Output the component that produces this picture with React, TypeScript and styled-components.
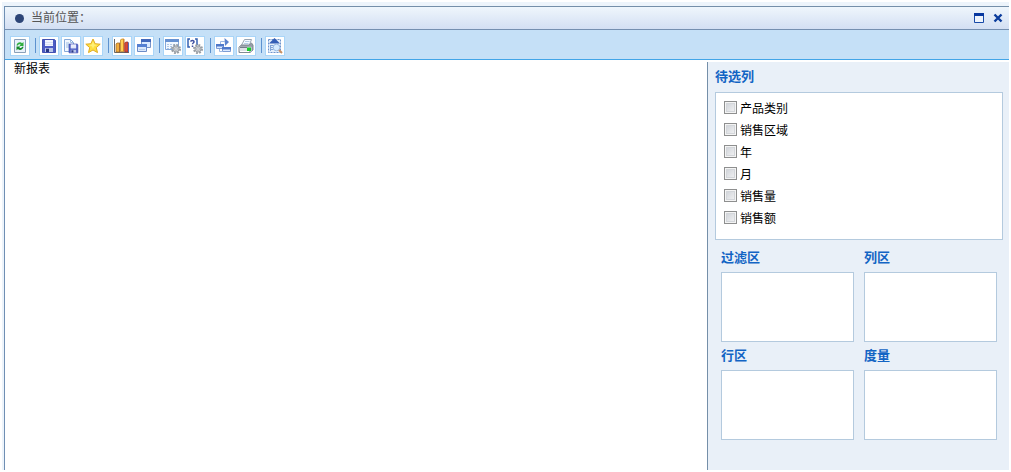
import React from "react";
import styled, { createGlobalStyle } from "styled-components";

const GlobalStyle = createGlobalStyle`
  * { box-sizing: border-box; }
  body {
    margin: 0;
    background: #fff;
    color: #000;
    font-family: "Liberation Sans", "Noto Sans CJK SC", sans-serif;
    font-size: 12px;
    line-height: 16px;
  }
`;

const Page = styled.div`
  display: flex;
  flex-direction: column;
  min-height: 100vh;
  padding: 2px 2px 2px;
`;

const Frame = styled.div`
  display: flex;
  flex: 1;
  flex-direction: column;
  padding: 4px 0 0 2px;
  background: #edf4fb;
`;

const Panel = styled.main`
  display: flex;
  flex: 1;
  flex-direction: column;
  border-left: 1px solid #6f8fb4;
  background: #fff;
`;

const TitleBar = styled.header`
  display: flex;
  align-items: center;
  height: 24px;
  padding: 0 6px 0 10px;
  border-top: 1px solid #758fa9;
  border-bottom: 1px solid #758fb0;
  background: linear-gradient(#eff6fc, #d3dff3);
`;

const Bullet = styled.span`
  width: 9px;
  height: 9px;
  margin-right: 7px;
  border-radius: 50%;
  background: #2d4577;
`;

const Title = styled.h1`
  flex: 1;
  margin: 0;
  color: #555;
  font-size: 12px;
  font-weight: 400;
  line-height: 16px;
`;

const WindowButton = styled.button`
  display: flex;
  width: 10px;
  height: 10px;
  margin-left: 9px;
  padding: 0;
  border: 0;
  background: none;
`;

const Toolbar = styled.div`
  display: flex;
  align-items: center;
  gap: 2px;
  height: 30px;
  padding: 2px 5px 0;
  border-bottom: 1px solid #42a5e8;
  background: #c5e0f7;
`;

const ToolButton = styled.button`
  display: flex;
  align-items: center;
  justify-content: center;
  width: 20px;
  height: 20px;
  padding: 0;
  border: 1px solid #a9d5f8;
  background: #fff;
`;

const Separator = styled.span`
  width: 1px;
  height: 15px;
  margin: 0 1px 0 3px;
  background: #5d92cf;
`;

const Body = styled.div`
  display: flex;
  flex: 1;
  padding-top: 2px;
`;

const Report = styled.section`
  flex: 1;
  padding: 0 9px;
`;

const ReportTitle = styled.h2`
  margin: 0;
  font-size: 12px;
  font-weight: 400;
  line-height: 14px;
`;

const Sidebar = styled.aside`
  flex: 0 0 302px;
  padding: 6px 6px 6px 7px;
  border-left: 1px solid #758fa9;
  background: #e9f0f8;
`;

const Heading = styled.h3`
  margin: 0;
  color: #1264c4;
  font-size: 13px;
  font-weight: 700;
  line-height: 18px;
`;

const ColumnList = styled.ul`
  height: 148px;
  margin: 6px 0 9px;
  padding: 5px 8px;
  border: 1px solid #b4cade;
  background: #fff;
  list-style: none;
`;

const ColumnItem = styled.li`
  display: flex;
  align-items: center;
  height: 22px;
`;

const ColumnLabel = styled.label`
  display: flex;
  align-items: flex-start;
  gap: 3px;
  line-height: 18px;
`;

const Checkbox = styled.input`
  appearance: none;
  width: 13px;
  height: 13px;
  margin: 1px 0 0;
  border: 1px solid #8e8f8f;
  background: linear-gradient(135deg, #cbcfd5, #f6f6f6);
  box-shadow: inset 0 0 0 1px #f4f4f4, inset 0 0 0 2px #d3d6da;
  &:checked { background: #1264c4; }
`;

const Zones = styled.div`
  display: grid;
  grid-template-columns: 1fr 1fr;
  column-gap: 10px;
  row-gap: 5px;
  padding: 0 6px;
`;

const DropZone = styled.div`
  height: 70px;
  margin-top: 5px;
  border: 1px solid #b4cade;
  background: #fff;
`;

const Icon = ({ children }: { children: React.ReactNode }) => (
  <svg width="16" height="16" viewBox="0 0 16 16" aria-hidden="true">
    {children}
  </svg>
);

const RefreshIcon = () => (
  <Icon>
    <path d="M2.5 1.5h11v13h-11z" fill="#e9f1fa" stroke="#8aa0b9" />
    <path d="M4.5 7.5C5 4.5 8.5 3.5 10 5.2L11.5 4v4H7.5L8.7 6.6C7.5 6 6.2 6.5 6 7.5z" fill="#2fae3d" />
    <path d="M11.6 8.8C11 12 7.5 12.8 6 11L4.5 12.3V8.5h4L7.3 9.8c1.2.6 2.4.1 2.8-1z" fill="#158a29" />
  </Icon>
);

const Floppy = () => (
  <>
    <path d="M1.5 1.5h12l1 1v12h-13z" fill="#4c5cc4" stroke="#4351b0" />
    <path d="M4 2h8v6H4z" fill="#f2f5ff" />
    <path d="M4 4.5h8M4 6.5h8" stroke="#c8d1ee" strokeWidth=".6" />
    <path d="M4 10h8v4H4z" fill="#b9c5e8" />
    <path d="M5 10.7h3V14H5z" fill="#283584" />
  </>
);

const SaveIcon = () => <Icon><Floppy /></Icon>;

const SaveAsIcon = () => (
  <Icon>
    <path d="M1.5 1.5h6l3 3v9h-9z" fill="#f3f8ff" stroke="#87a9d8" />
    <path d="M7.5 1.5v3h3M3 5h3M3 7h3M3 9h3" fill="none" stroke="#9dbbe1" />
    <g transform="translate(5 5) scale(.68)"><Floppy /></g>
  </Icon>
);

const StarIcon = () => (
  <Icon>
    <path d="M8 1l2.1 4.7 5.1.5-3.9 3.4 1.2 5L8 12l-4.5 2.6 1.2-5L.8 6.2l5.1-.5z" fill="#ffdf40" stroke="#dfac25" strokeLinejoin="round" />
    <path d="M8 3.3l1.2 3.2 3 .4-3 1.4L8 10.5 6.8 8.2l-3-1.3 3-.4z" fill="#fff078" />
  </Icon>
);

const ChartIcon = () => (
  <Icon>
    <path d="M.5 1v13.5H15" fill="none" stroke="#666" />
    <path d="M2 6l1-1h3v9H2z" fill="#f1ad3d" stroke="#9a6425" strokeWidth=".7" />
    <path d="M5 5h1v9H5z" fill="#a56830" />
    <path d="M6.5 2l1-1H10v12.5H6.5z" fill="#ffd051" stroke="#b5781e" strokeWidth=".7" />
    <path d="M9 1.3h1.2v12H9z" fill="#d88527" />
    <path d="M10.7 5l1-1H14v10h-3.3z" fill="#db4938" stroke="#8e3030" strokeWidth=".7" />
    <path d="M14 4l1 1v9h-1z" fill="#4f70bd" />
  </Icon>
);

const WindowsIcon = () => (
  <Icon>
    <path d="M5.5 1.5h9v8h-9z" fill="#dceaff" stroke="#7894c9" />
    <path d="M5 1h10v3H5z" fill="#4268bb" />
    <path d="M1.5 6.5h9v7h-9z" fill="#dbe8fb" stroke="#6c8bc7" />
    <path d="M1 6h10v3H1z" fill="#5680d1" />
    <path d="M3 11.5h6" stroke="#b4cae9" />
  </Icon>
);

const Gear = () => (
  <>
    <circle cx="11" cy="11" r="4" fill="none" stroke="#989da3" strokeWidth="2" strokeDasharray="1.8 1.34" />
    <circle cx="11" cy="11" r="3.1" fill="#c9cdd1" stroke="#9a9fa5" />
    <circle cx="11" cy="11" r="1.2" fill="#fff" stroke="#8b9096" strokeWidth=".6" />
  </>
);

const TableGearIcon = () => (
  <Icon>
    <path d="M.5 1.5h13v10H.5z" fill="#f2f8ff" stroke="#82a7d9" />
    <path d="M0 1h14v3H0z" fill="#6691d1" />
    <path d="M2 6.5h10M2 8.5h9M2 10.5h6" stroke="#afc8e7" strokeDasharray="2 1" />
    <Gear />
  </Icon>
);

const QueryGearIcon = () => (
  <Icon>
    <path d="M3 1H1v8h2M8 1h2v6" fill="none" stroke="#3461b2" strokeWidth="1.5" />
    <path d="M3.7 3.7c.2-1.7 3.5-1.5 3.3.2-.1 1.2-1.5 1-1.5 2.4M5.5 7.5V9" fill="none" stroke="#4052a1" strokeWidth="1.5" />
    <Gear />
  </Icon>
);

const FlowIcon = () => (
  <Icon>
    <path d="M8.5 0L13 4 9 8z" fill="#5c83cd" />
    <path d="M4.5 7V3.5H9" fill="none" stroke="#9eb9e3" />
    <path d="M.5 6.5h7v4h-7zM6.5 9.5h8v4h-8z" fill="#dceaff" stroke="#7e9dd4" />
    <path d="M0 6h8v2.5H0zM6 9h9v2.5H6z" fill="#4f79ca" />
    <path d="M3.5 11v2.5H6" fill="none" stroke="#9eb9e3" />
  </Icon>
);

const PrinterIcon = () => (
  <Icon>
    <path d="M6.5 1.5h7L11 8H3z" fill="#f6faff" stroke="#98a5b3" />
    <path d="M7 3.5h4.5M6 5.5h4.5" stroke="#b5cde5" />
    <path d="M1 9l2.5-2H11l2.5-2L15 7v5l-3 2.5H1z" fill="#949da7" stroke="#818a94" />
    <path d="M1.5 8.8h12v4.7h-12z" fill="#dce0e5" />
    <path d="M2 9.5h7" stroke="#737d88" />
    <path d="M9 9.5h4v3.5H9z" fill="#14cf29" />
    <path d="M2 13.5h9" stroke="#fff" />
  </Icon>
);

const PreviewIcon = () => (
  <Icon>
    <path d="M1.5 1.5h12v13h-12z" fill="#e3eefb" stroke="#6d93cc" strokeDasharray="2 1" />
    <path d="M7.5 0L13 5.5H2z" fill="#345eb6" />
    <path d="M3.5 7v6M3.5 7.5h9M3.5 9.5h3M3.5 11.5h3" fill="none" stroke="#82a5d7" />
    <circle cx="9.5" cy="9.5" r="3.3" fill="#d6ebff" stroke="#9cbce3" />
    <path d="M12 12l3 3" stroke="#c99062" strokeWidth="2" />
  </Icon>
);

const toolGroups = [
  [{ label: "刷新", Drawing: RefreshIcon }],
  [
    { label: "保存", Drawing: SaveIcon },
    { label: "另存为", Drawing: SaveAsIcon },
    { label: "收藏", Drawing: StarIcon },
  ],
  [
    { label: "图表", Drawing: ChartIcon },
    { label: "窗口", Drawing: WindowsIcon },
  ],
  [
    { label: "表格设置", Drawing: TableGearIcon },
    { label: "参数设置", Drawing: QueryGearIcon },
  ],
  [
    { label: "转换", Drawing: FlowIcon },
    { label: "打印", Drawing: PrinterIcon },
  ],
  [{ label: "预览", Drawing: PreviewIcon }],
];

const columns = ["产品类别", "销售区域", "年", "月", "销售量", "销售额"];
const zones = ["过滤区", "列区", "行区", "度量"];

export default function App() {
  return (
    <Page>
      <GlobalStyle />
      <Frame>
        <Panel>
          <TitleBar>
            <Bullet />
            <Title>当前位置：</Title>
            <WindowButton aria-label="最大化">
              <svg width="10" height="10" viewBox="0 0 10 10">
                <path d="M.5 .5h9v9h-9z" fill="#eef4fc" stroke="#1749a8" />
                <path d="M0 0h10v3H0z" fill="#0838a0" />
              </svg>
            </WindowButton>
            <WindowButton aria-label="关闭">
              <svg width="10" height="10" viewBox="0 0 10 10">
                <path d="M1.5 1.5l7 7M8.5 1.5l-7 7" stroke="#0b3c9c" strokeWidth="2.4" />
              </svg>
            </WindowButton>
          </TitleBar>
          <Toolbar role="toolbar">
            {toolGroups.map((group, index) => (
              <React.Fragment key={index}>
                {index > 0 && <Separator />}
                {group.map(({ label, Drawing }) => (
                  <ToolButton key={label} aria-label={label}>
                    <Drawing />
                  </ToolButton>
                ))}
              </React.Fragment>
            ))}
          </Toolbar>
          <Body>
            <Report>
              <ReportTitle>新报表</ReportTitle>
            </Report>
            <Sidebar>
              <Heading>待选列</Heading>
              <ColumnList>
                {columns.map((name) => (
                  <ColumnItem key={name}>
                    <ColumnLabel>
                      <Checkbox type="checkbox" />
                      {name}
                    </ColumnLabel>
                  </ColumnItem>
                ))}
              </ColumnList>
              <Zones>
                {zones.map((name) => (
                  <section key={name}>
                    <Heading>{name}</Heading>
                    <DropZone />
                  </section>
                ))}
              </Zones>
            </Sidebar>
          </Body>
        </Panel>
      </Frame>
    </Page>
  );
}
